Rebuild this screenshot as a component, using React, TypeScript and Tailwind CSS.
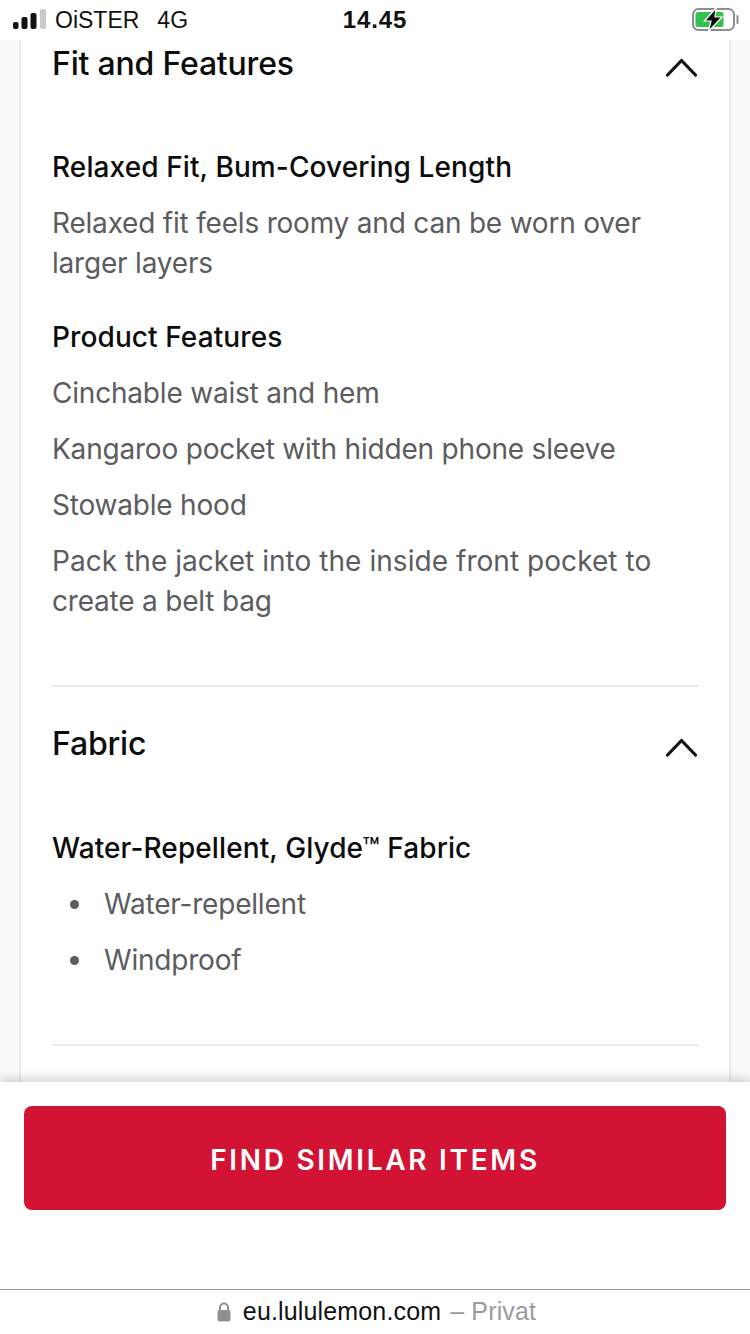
const fontStack = { fontFamily: 'Inter, "Liberation Sans", sans-serif' };

const Chevron = () => (
    <svg width="34" height="20" viewBox="0 0 34 20" fill="none" className="shrink-0">
        <path d="M3.5 17 L17.5 2.5 L31.5 17" stroke="#111111" strokeWidth="3.2" strokeLinecap="round" strokeLinejoin="round" />
    </svg>
);

const SectionHeader = ({ title, className }: { title: string; className: string }) => (
    <div className={`flex justify-between ${className}`}>
        <h2 className="text-[32px] leading-[40px] font-medium tracking-[-0.2px] text-[#0c0c0c]">{title}</h2>
        <div className="pt-[14px]"><Chevron /></div>
    </div>
);

const SubHead = ({ children, className = '' }: { children: React.ReactNode; className?: string }) => (
    <h3 className={`text-[28px] leading-[40px] font-medium tracking-[0.1px] text-[#0c0c0c] ${className}`}>{children}</h3>
);

const Body = ({ children }: { children: React.ReactNode }) => (
    <p className="mt-4 text-[28px] leading-[40px] tracking-[-0.2px] text-[#5b5c60]">{children}</p>
);

const Bullet = ({ children }: { children: React.ReactNode }) => (
    <div className="mt-4 flex items-center text-[28px] leading-[40px] tracking-[-0.2px] text-[#5b5c60]">
        <span className="ml-[18px] mr-[25px] h-[9px] w-[9px] rounded-full bg-[#5b5c60]"></span>
        {children}
    </div>
);

const StatusBar = () => (
    <div className="grid h-10 shrink-0 grid-cols-3 items-center bg-white text-[23px] text-[#111111]" style={{ fontFamily: '"Liberation Sans", sans-serif' }}>
        <div className="flex items-center pl-[13px]">
            <svg width="34" height="22" viewBox="0 0 34 22">
                <rect x="0" y="13" width="5.5" height="7" rx="2" fill="#111" />
                <rect x="8.5" y="8" width="6" height="12" rx="2" fill="#111" />
                <rect x="17.5" y="4" width="6" height="16" rx="2" fill="#111" />
                <rect x="27" y="0" width="6" height="20" rx="2" fill="#c9c9c9" />
            </svg>
            <span className="ml-2">OiSTER</span>
            <span className="ml-[18px]">4G</span>
        </div>
        <div className="text-center text-[24px] font-bold tracking-[0.9px]">14.45</div>
        <div className="flex justify-end pr-[10px]">
            <svg width="50" height="26" viewBox="0 0 50 26">
                <rect x="3" y="2" width="41" height="21" rx="5.5" fill="none" stroke="#8e8e8e" strokeWidth="2" />
                <rect x="5.5" y="5" width="28" height="15" rx="2.5" fill="#34c24f" />
                <path d="M47.5 9 v7" stroke="#8e8e8e" strokeWidth="2" strokeLinecap="round" />
                <path d="M26 1 L14.5 14 H21 L18.5 24.5 L32 10 H25 Z" fill="#0a0a0a" stroke="#ffffff" strokeWidth="1.2" />
            </svg>
        </div>
    </div>
);

const App = () => {
    return (
        <div className="flex h-[1334px] w-[750px] flex-col overflow-hidden bg-white" style={fontStack}>
            <StatusBar />

            {/* Scrolled accordion card */}
            <div className="min-h-0 flex-1 overflow-hidden bg-[#fafafa] px-[19px]">
                <div className="h-full border-x-2 border-[#ebebeb] bg-white px-[31px] pt-1">
                    <SectionHeader title="Fit and Features" className="" />

                    <SubHead className="mt-[63px]">Relaxed Fit, Bum-Covering Length</SubHead>
                    <Body>Relaxed fit feels roomy and can be worn over<br />larger layers</Body>

                    <SubHead className="mt-[34px]">Product Features</SubHead>
                    <Body>Cinchable waist and hem</Body>
                    <Body>Kangaroo pocket with hidden phone sleeve</Body>
                    <Body>Stowable hood</Body>
                    <Body><span className="tracking-[0.05px]">Pack the jacket into the inside front pocket to</span><br />create a belt bag</Body>

                    <div className="mt-16 h-[2px] bg-[#ebebeb]"></div>
                    <SectionHeader title="Fabric" className="mt-[37px]" />

                    <SubHead className="mt-16">Water-Repellent, Glyde™ Fabric</SubHead>
                    <Bullet>Water-repellent</Bullet>
                    <Bullet>Windproof</Bullet>

                    <div className="mt-16 h-[2px] bg-[#ebebeb]"></div>
                </div>
            </div>

            {/* Sticky call to action */}
            <div className="relative h-[207px] shrink-0 bg-white px-6 pt-6 shadow-[0_-4px_10px_rgba(0,0,0,0.16)]">
                <button className="h-[104px] w-full rounded-lg bg-[#d31334] pt-1 text-[28px] font-semibold tracking-[2.7px] text-white">
                    FIND SIMILAR ITEMS
                </button>
            </div>

            {/* Safari address bar */}
            <div className="relative flex h-[45px] shrink-0 items-center justify-center border-t border-[#9a9a9a] bg-white pl-[3px] text-[25px] tracking-[0.15px]" style={{ fontFamily: '"Liberation Sans", sans-serif' }}>
                <svg width="14" height="20" viewBox="0 0 14 20" className="mr-[12px]">
                    <path d="M3 9 V5.5 a4 4 0 0 1 8 0 V9" fill="none" stroke="#8e8e93" strokeWidth="2" />
                    <rect x="0.5" y="8" width="13" height="11.5" rx="2" fill="#8e8e93" />
                </svg>
                <span className="text-[#111111]">eu.lululemon.com</span>
                <span className="ml-[9px] text-[#9b9b9f]">– Privat</span>
            </div>
        </div>
    );
};

export default App;
